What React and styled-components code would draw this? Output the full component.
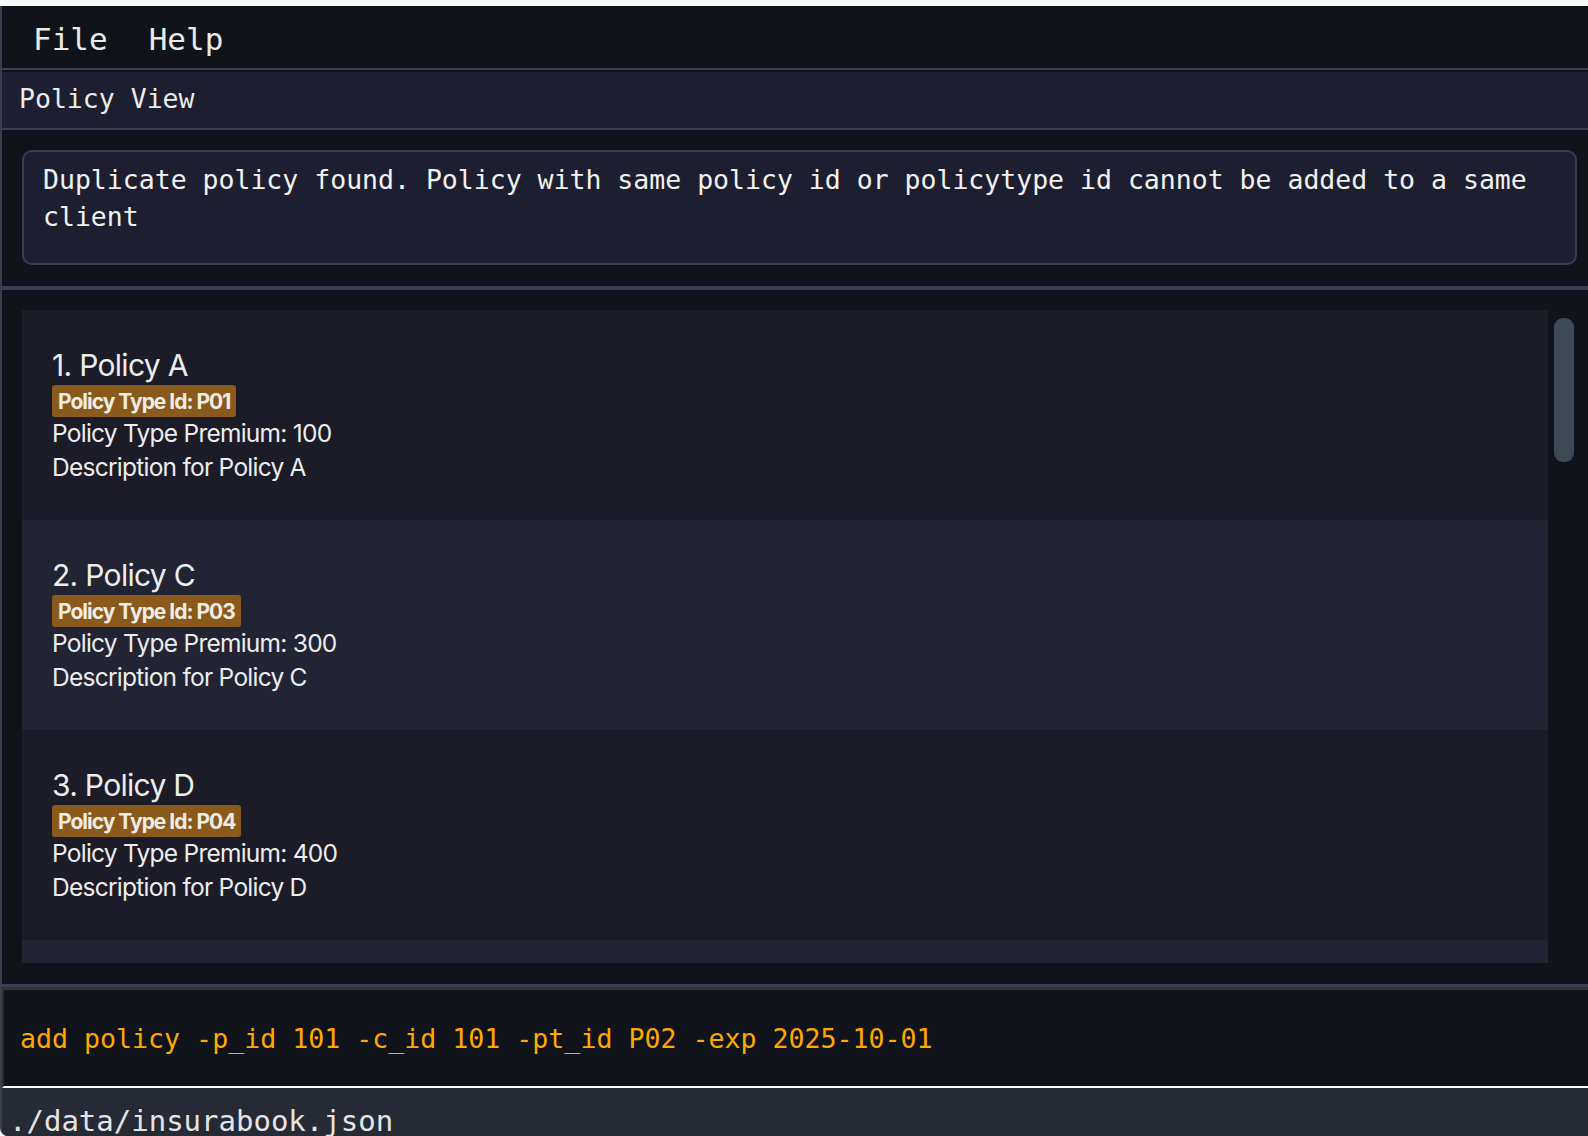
import { createGlobalStyle } from 'styled-components';
import styled from 'styled-components';

const GlobalStyle = createGlobalStyle`
  html, body {
    margin: 0;
    padding: 0;
    background-color: #f8f8f8;
  }
  * {
    box-sizing: border-box;
  }
`;

const mono = `'DejaVu Sans Mono', 'Liberation Mono', monospace`;

const TopStrip = styled.div`
  height: 6px;
  background-color: #f8f8f8;
`;

const Window = styled.div`
  height: 1130px;
  display: flex;
  flex-direction: column;
  background-color: #10141a;
  border-left: 2px solid #3b3e52;
  border-bottom-left-radius: 8px;
  overflow: hidden;
  font-family: ${mono};
  color: #ececec;
`;

const MenuBar = styled.div`
  height: 64px;
  flex-shrink: 0;
  display: flex;
  align-items: center;
  gap: 41px;
  padding: 4px 0 0 31px;
  font-size: 31px;
  border-bottom: 2px solid #3c3e55;
`;

const MenuItem = styled.span`
  color: #eaeaea;
`;

const TitleBar = styled.div`
  height: 58px;
  flex-shrink: 0;
  margin-top: 2px;
  display: flex;
  align-items: center;
  padding: 0 0 4px 17px;
  font-size: 26.5px;
  background-color: #1d1f30;
  border-bottom: 2px solid #3c3e55;
`;

const MessagePane = styled.div`
  flex-shrink: 0;
  padding: 20px 11px 21px 20px;
  border-bottom: 4px solid #3c3e55;
`;

const MessageBox = styled.div`
  height: 115px;
  padding: 10px 16px 0 19px;
  background-color: #1d1f30;
  border: 2px solid #3a3d52;
  border-radius: 10px;
  font-size: 26.5px;
  line-height: 36.7px;
  color: #f2f2f2;
`;

const ListPane = styled.div`
  flex: 1;
  min-height: 0;
  display: flex;
  gap: 6px;
  padding: 20px 14px 21px 20px;
`;

const CardList = styled.div`
  flex: 1;
  overflow: hidden;
  display: flex;
  flex-direction: column;
`;

const Card = styled.div`
  flex-shrink: 0;
  height: 210px;
  padding: 37px 30px 0;
  background-color: ${(props) => (props.$even ? '#222433' : '#1c1c28')};
  font-family: Inter, 'Noto Sans', sans-serif;
  color: #ededed;
`;

const CardTitle = styled.div`
  font-size: 30px;
  line-height: 37px;
  letter-spacing: -0.7px;
`;

const Badge = styled.div`
  display: inline-flex;
  align-items: center;
  height: 32px;
  margin-top: 1px;
  padding: 0 6px 0 6px;
  border-radius: 3px;
  background-color: #8a5a1c;
  font-size: 21px;
  font-weight: 700;
  letter-spacing: -1px;
  color: #f1ece4;
`;

const CardLine = styled.div`
  font-size: 24.5px;
  line-height: 33.5px;
  letter-spacing: -0.75px;
`;

const ScrollTrack = styled.div`
  width: 20px;
  flex-shrink: 0;
`;

const ScrollThumb = styled.div`
  margin-top: 8px;
  height: 144px;
  border-radius: 9px;
  background-color: #3d4955;
`;

const CommandArea = styled.div`
  flex-shrink: 0;
  border-top: 3px solid #3c3e55;
`;

const CommandBox = styled.div`
  height: 101px;
  display: flex;
  align-items: center;
  padding: 1px 0 0 16px;
  background-color: #10141a;
  border-top: 3px solid #333333;
  border-left: 2px solid #2a2a2a;
  border-bottom: 2px solid #ffffff;
  font-size: 26.6px;
  color: #ffa800;
  white-space: nowrap;
`;

const StatusBar = styled.div`
  height: 48px;
  flex-shrink: 0;
  padding: 16px 0 0 7px;
  background-color: #252a35;
  font-size: 29px;
  line-height: 34px;
  color: #e4e4e4;
  overflow: hidden;
  white-space: nowrap;
`;

const policies = [
  { name: 'Policy A', typeId: 'P01', premium: 100 },
  { name: 'Policy C', typeId: 'P03', premium: 300 },
  { name: 'Policy D', typeId: 'P04', premium: 400 },
  { name: 'Policy E', typeId: 'P05', premium: 500 },
];

export default function App() {
  return (
    <>
      <GlobalStyle />
      <TopStrip />
      <Window>
        <MenuBar>
          <MenuItem>File</MenuItem>
          <MenuItem>Help</MenuItem>
        </MenuBar>
        <TitleBar>Policy View</TitleBar>
        <MessagePane>
          <MessageBox>
            Duplicate policy found. Policy with same policy id or policytype id
            cannot be added to a same client
          </MessageBox>
        </MessagePane>
        <ListPane>
          <CardList>
            {policies.map((policy, index) => (
              <Card key={index} $even={index % 2 === 1}>
                <CardTitle>
                  {index + 1}. {policy.name}
                </CardTitle>
                <Badge>Policy Type Id: {policy.typeId}</Badge>
                <CardLine>Policy Type Premium: {policy.premium}</CardLine>
                <CardLine>Description for {policy.name}</CardLine>
              </Card>
            ))}
          </CardList>
          <ScrollTrack>
            <ScrollThumb />
          </ScrollTrack>
        </ListPane>
        <CommandArea>
          <CommandBox>
            add policy -p_id 101 -c_id 101 -pt_id P02 -exp 2025-10-01
          </CommandBox>
        </CommandArea>
        <StatusBar>./data/insurabook.json</StatusBar>
      </Window>
    </>
  );
}
